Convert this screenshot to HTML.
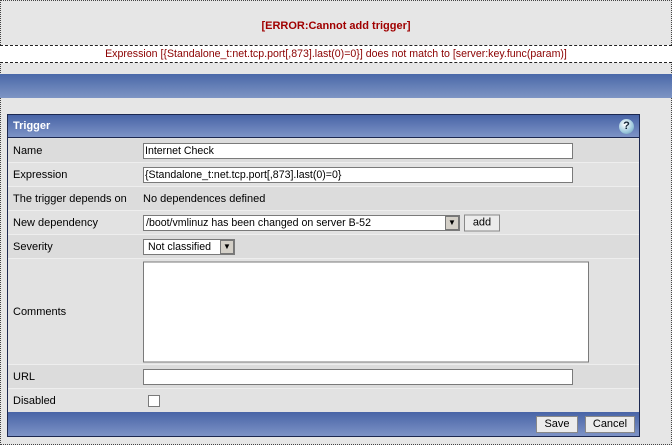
<!DOCTYPE html>
<html><head><style>
*{box-sizing:border-box;margin:0;padding:0}
body{width:672px;height:445px;background:#e6e6e6;font-family:"Liberation Sans",sans-serif;font-size:11px;color:#000;position:relative;overflow:hidden}
.frame{position:absolute;left:0;top:0;width:672px;height:445px;border:1px dotted #444}
.err{position:absolute;left:0;top:20px;width:672px;text-align:center;color:#a00000;font-weight:bold;font-size:11px}
.msg{position:absolute;left:0;top:45px;width:672px;height:18px;background:#fff;border-top:1px dashed #222;border-bottom:1px dashed #222;color:#8b0000;text-align:center;line-height:16px;font-size:10.6px}
.bar{position:absolute;left:0;top:74px;width:672px;height:24px;background:linear-gradient(#4a68a8,#7e95c4)}
.tbl{position:absolute;left:7px;top:114px;width:633px;height:323px;border:1px solid #1c2850;background:#e0e0e0}
.hd{height:23px;background:linear-gradient(#4864a6,#7d93c6);color:#fff;font-weight:bold;padding-left:5px;line-height:22px;position:relative;border-bottom:1px solid #1c2850}
.help{position:absolute;right:5px;top:4px;width:15px;height:15px;border-radius:50%;background:radial-gradient(circle at 40% 35%,#fff,#9cc8dc 60%,#5b8fa8);color:#123;font-size:11px;line-height:15px;text-align:center}
.row{position:absolute;left:0;width:631px;border-bottom:1px solid #eee}
.row .l{position:absolute;left:5px;top:50%;transform:translateY(-50%)}
.row .v{position:absolute;left:135px;top:50%;transform:translateY(-50%)}
.a{background:#dcdcdc}.b{background:#e2e2e2}
.inp{background:#fff;border:1px solid #7a7a7a;height:16px;line-height:14px;padding-left:1px;white-space:nowrap;font-size:10.6px}
.btn{background:#ececec;border:1px solid #888;height:17px;line-height:15px;text-align:center}
.dd{position:absolute;top:0px;width:14px;height:14px;background:#d4d0c8;border:1px solid #777;font-size:8px;line-height:12px;text-align:center}
.ft{position:absolute;left:0;top:297px;width:631px;height:24px;background:linear-gradient(#4864a6,#7d93c6)}
</style></head><body>
<div class="frame"></div>
<div class="err">[ERROR:Cannot add trigger]</div>
<div class="msg">Expression [{Standalone_t:net.tcp.port[,873].last(0)=0}] does not match to [server:key.func(param)]</div>
<div class="bar"></div>
<div class="tbl">
<div class="hd">Trigger<div class="help">?</div></div>
<div class="row a" style="top:24px;height:24px"><span class="l">Name</span><div class="v inp" style="width:430px">Internet Check</div></div>
<div class="row b" style="top:48px;height:24px"><span class="l">Expression</span><div class="v inp" style="width:430px">{Standalone_t:net.tcp.port[,873].last(0)=0}</div></div>
<div class="row a" style="top:72px;height:24px"><span class="l">The trigger depends on</span><span class="v">No dependences defined</span></div>
<div class="row b" style="top:96px;height:24px"><span class="l">New dependency</span>
<div class="v inp" style="width:317px;padding-left:2px">/boot/vmlinuz has been changed on server B-52<span class="dd" style="right:0px">▼</span></div>
<div class="v btn" style="left:456px;width:36px">add</div></div>
<div class="row a" style="top:120px;height:24px"><span class="l">Severity</span><div class="v inp" style="width:92px;padding-left:4px">Not classified<span class="dd" style="right:0px">▼</span></div></div>
<div class="row b" style="top:144px;height:106px"><span class="l">Comments</span><div class="v inp" style="width:446px;height:101px"></div></div>
<div class="row a" style="top:250px;height:24px"><span class="l">URL</span><div class="v inp" style="width:430px"></div></div>
<div class="row b" style="top:274px;height:23px;border:none"><span class="l">Disabled</span><div class="v inp" style="left:140px;width:12px;height:12px"></div></div>
<div class="ft">
<div class="btn" style="position:absolute;left:528px;top:4px;width:42px">Save</div>
<div class="btn" style="position:absolute;left:577px;top:4px;width:50px">Cancel</div>
</div>
</div>
</body></html>
